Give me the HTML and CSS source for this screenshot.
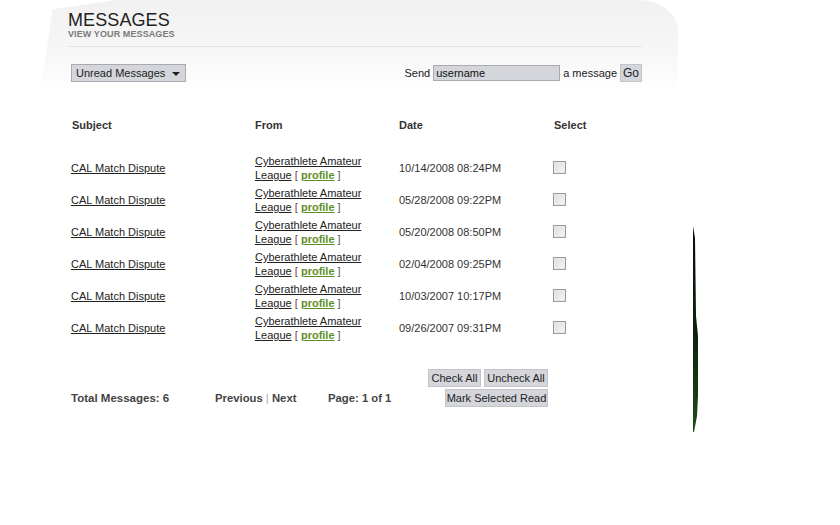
FILE: index.html
```html
<!DOCTYPE html>
<html>
<head>
<meta charset="utf-8">
<link rel="stylesheet" href="styles.css">
</head>
<body>
<div class="page">
  <div class="head">
    <div class="head-inner">
      <div class="titles">
        <h1 class="title">MESSAGES</h1>
        <div class="subtitle">VIEW YOUR MESSAGES</div>
      </div>
      <div class="controls">
        <div class="select"><span>Unread Messages</span><span class="arrow"></span></div>
        <div class="send">
          <span>Send</span>
          <span class="input">username</span>
          <span>a message</span>
          <span class="btn go">Go</span>
        </div>
      </div>
    </div>
  </div>

  <div class="list">
    <div class="row header">
      <div>Subject</div><div>From</div><div>Date</div><div>Select</div>
    </div>
    <div class="row">
      <div><a class="lnk">CAL Match Dispute</a></div>
      <div class="from"><div><a class="lnk">Cyberathlete Amateur</a></div><div><a class="lnk">League</a> <span class="br">[</span> <a class="profile">profile</a> <span class="br">]</span></div></div>
      <div class="date">10/14/2008 08:24PM</div>
      <div><span class="cb"></span></div>
    </div>
    <div class="row">
      <div><a class="lnk">CAL Match Dispute</a></div>
      <div class="from"><div><a class="lnk">Cyberathlete Amateur</a></div><div><a class="lnk">League</a> <span class="br">[</span> <a class="profile">profile</a> <span class="br">]</span></div></div>
      <div class="date">05/28/2008 09:22PM</div>
      <div><span class="cb"></span></div>
    </div>
    <div class="row">
      <div><a class="lnk">CAL Match Dispute</a></div>
      <div class="from"><div><a class="lnk">Cyberathlete Amateur</a></div><div><a class="lnk">League</a> <span class="br">[</span> <a class="profile">profile</a> <span class="br">]</span></div></div>
      <div class="date">05/20/2008 08:50PM</div>
      <div><span class="cb"></span></div>
    </div>
    <div class="row">
      <div><a class="lnk">CAL Match Dispute</a></div>
      <div class="from"><div><a class="lnk">Cyberathlete Amateur</a></div><div><a class="lnk">League</a> <span class="br">[</span> <a class="profile">profile</a> <span class="br">]</span></div></div>
      <div class="date">02/04/2008 09:25PM</div>
      <div><span class="cb"></span></div>
    </div>
    <div class="row">
      <div><a class="lnk">CAL Match Dispute</a></div>
      <div class="from"><div><a class="lnk">Cyberathlete Amateur</a></div><div><a class="lnk">League</a> <span class="br">[</span> <a class="profile">profile</a> <span class="br">]</span></div></div>
      <div class="date">10/03/2007 10:17PM</div>
      <div><span class="cb"></span></div>
    </div>
    <div class="row">
      <div><a class="lnk">CAL Match Dispute</a></div>
      <div class="from"><div><a class="lnk">Cyberathlete Amateur</a></div><div><a class="lnk">League</a> <span class="br">[</span> <a class="profile">profile</a> <span class="br">]</span></div></div>
      <div class="date">09/26/2007 09:31PM</div>
      <div><span class="cb"></span></div>
    </div>

    <div class="footer">
      <div class="stats">
        <span class="total">Total Messages: 6</span>
        <span class="pager">Previous <span class="sep">|</span> Next</span>
        <span class="pages">Page: 1 of 1</span>
      </div>
      <div class="actions">
        <div class="act-row">
          <span class="btn w-check">Check All</span>
          <span class="btn w-uncheck">Uncheck All</span>
        </div>
        <div class="act-row">
          <span class="btn w-mark">Mark Selected Read</span>
        </div>
      </div>
    </div>
  </div>

  <svg class="streak" width="10" height="210" viewBox="0 0 10 210">
    <defs>
      <linearGradient id="g" x1="0" y1="0" x2="0" y2="1">
        <stop offset="0" stop-color="#061006"/>
        <stop offset="0.5" stop-color="#0c200c"/>
        <stop offset="1" stop-color="#1f4a1a"/>
      </linearGradient>
    </defs>
    <polygon points="1,0 3,12 4,90 6,110 6,170 5,190 2,206 1,206" fill="url(#g)"/>
  </svg>
</div>
</body>
</html>
```

FILE: styles.css
```css
html, body {
  margin: 0;
  padding: 0;
  background: #ffffff;
}

body {
  font-family: "Liberation Sans", Arial, sans-serif;
  font-size: 11px;
  color: #333333;
}

.page {
  position: relative;
  width: 840px;
  height: 525px;
  overflow: hidden;
}

.head {
  margin-left: 40px;
  width: 638px;
  height: 92px;
  background: linear-gradient(180deg, #f1f1f1 0%, #f6f6f6 55%, #ffffff 100%);
  border-top-right-radius: 40px 30px;
  clip-path: polygon(12% 0, 100% 0, 100% 100%, 0 100%, 2% 10%);
}

.head-inner {
  padding-left: 28px;
  width: 574px;
}

.titles {
  border-bottom: 1px solid #e3e3e3;
  padding-bottom: 7px;
}

.title {
  margin: 0;
  padding-top: 11px;
  font-size: 18px;
  line-height: 18px;
  font-weight: normal;
  color: #222222;
  letter-spacing: 0.1px;
}

.subtitle {
  font-size: 9px;
  line-height: 10px;
  font-weight: bold;
  color: #7a7a7a;
  letter-spacing: 0.1px;
}

.controls {
  margin-top: 17px;
  display: flex;
  justify-content: space-between;
  align-items: center;
  padding-left: 3px;
}

.select {
  box-sizing: border-box;
  width: 115px;
  height: 18px;
  background: #d4d6db;
  border: 1px solid #a9abb0;
  display: flex;
  align-items: center;
  justify-content: space-between;
  padding: 0 5px 0 4px;
  font-size: 11px;
  color: #222;
}

.arrow {
  width: 0;
  height: 0;
  border-left: 4px solid transparent;
  border-right: 4px solid transparent;
  border-top: 4px solid #222;
  margin-top: 2px;
}

.send {
  display: flex;
  align-items: center;
  gap: 3px;
  color: #222;
}

.input {
  box-sizing: border-box;
  width: 127px;
  height: 16px;
  line-height: 14px;
  background: #d4d6db;
  border: 1px solid #a9abb0;
  padding-left: 2px;
  color: #111;
}

.btn {
  box-sizing: border-box;
  display: inline-block;
  height: 18px;
  line-height: 16px;
  background: #d4d6db;
  border: 1px solid #c2c4c8;
  text-align: center;
  font-size: 11px;
  color: #222;
  white-space: nowrap;
}

.go {
  width: 22px;
  font-size: 12px;
}

.list {
  margin-top: 17px;
  padding-left: 71px;
  width: 477px;
}

.row {
  display: grid;
  grid-template-columns: 184px 144px 155px 60px;
  height: 32px;
  align-items: center;
}

.row.header {
  font-weight: bold;
  color: #333;
  margin-bottom: 11px;
}

.row.header > div:first-child {
  padding-left: 1px;
}

.lnk {
  color: #222;
  text-decoration: underline;
}

.from {
  line-height: 14px;
}

.br {
  color: #555;
}

.profile {
  color: #5f8f27;
  font-weight: bold;
  text-decoration: underline;
}

.date {
  color: #333;
}

.cb {
  display: block;
  box-sizing: border-box;
  width: 13px;
  height: 13px;
  border: 1px solid #9a9a9a;
  background: linear-gradient(135deg, #dcdcdc, #f8f8f8);
  box-shadow: inset 0 0 0 1px #eaeaea;
  margin-top: -1px;
  margin-left: -1px;
}

.footer {
  margin-top: 25px;
  display: flex;
  justify-content: space-between;
  align-items: flex-end;
}

.stats {
  display: flex;
  font-weight: bold;
  font-size: 11.5px;
  color: #444;
  height: 18px;
  align-items: center;
}

.total {
  width: 144px;
}

.pager {
  width: 113px;
  font-size: 11.3px;
}

.pages {
  font-size: 11.3px;
}

.sep {
  color: #aaa;
  font-weight: normal;
}

.actions {
  display: flex;
  flex-direction: column;
  align-items: flex-end;
  gap: 2px;
}

.act-row {
  display: flex;
  gap: 3px;
}

.w-check { width: 53px; }
.w-uncheck { width: 64px; }
.w-mark { width: 103px; }

.streak {
  position: absolute;
  left: 692px;
  top: 226px;
}
```
